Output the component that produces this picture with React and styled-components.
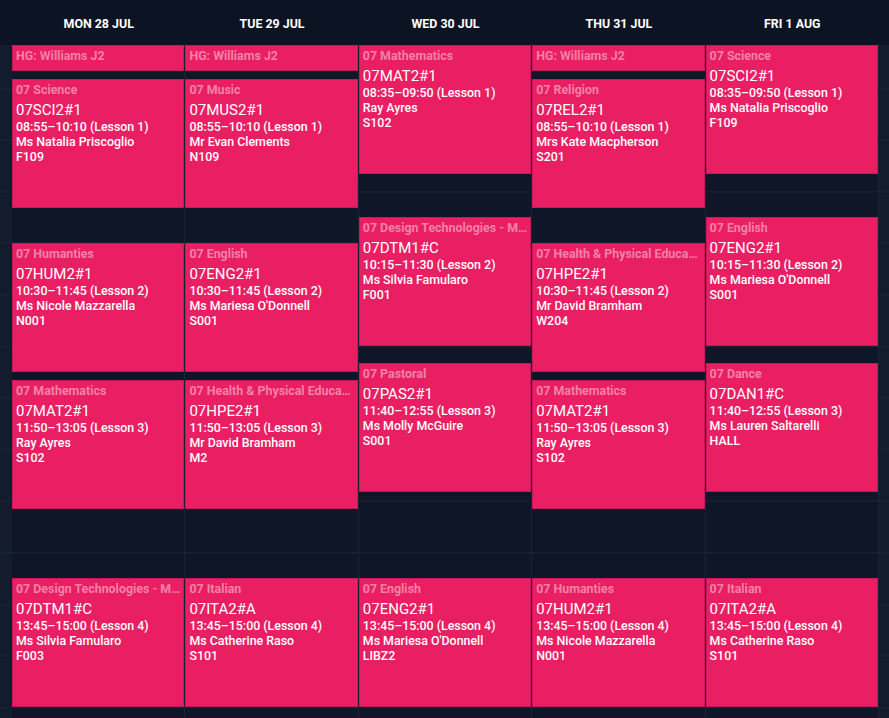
import React from 'react';
import styled, { createGlobalStyle } from 'styled-components';

const GlobalStyle = createGlobalStyle`
  html, body {
    margin: 0;
    padding: 0;
    background: #0d1526;
    font-family: Roboto, "Liberation Sans", sans-serif;
  }
`;

// time scale
const DAY_START = 8 * 60 + 35;
const DAY_END = 15 * 60 + 30;
const PX_PER_MIN = 1.72;

const toMin = (t) => {
  const [h, m] = t.split(':').map(Number);
  return h * 60 + m;
};

const days = [
  {
    label: 'MON 28 JUL',
    events: [
      { title: 'HG: Williams J2', start: '08:35', end: '08:50' },
      { title: '07 Science', code: '07SCI2#1', start: '08:55', end: '10:10', lesson: 1, teacher: 'Ms Natalia Priscoglio', room: 'F109' },
      { title: '07 Humanties', code: '07HUM2#1', start: '10:30', end: '11:45', lesson: 2, teacher: 'Ms Nicole Mazzarella', room: 'N001' },
      { title: '07 Mathematics', code: '07MAT2#1', start: '11:50', end: '13:05', lesson: 3, teacher: 'Ray Ayres', room: 'S102' },
      { title: '07 Design Technologies - Materials', code: '07DTM1#C', start: '13:45', end: '15:00', lesson: 4, teacher: 'Ms Silvia Famularo', room: 'F003' },
    ],
  },
  {
    label: 'TUE 29 JUL',
    events: [
      { title: 'HG: Williams J2', start: '08:35', end: '08:50' },
      { title: '07 Music', code: '07MUS2#1', start: '08:55', end: '10:10', lesson: 1, teacher: 'Mr Evan Clements', room: 'N109' },
      { title: '07 English', code: '07ENG2#1', start: '10:30', end: '11:45', lesson: 2, teacher: "Ms Mariesa O'Donnell", room: 'S001' },
      { title: '07 Health & Physical Education', code: '07HPE2#1', start: '11:50', end: '13:05', lesson: 3, teacher: 'Mr David Bramham', room: 'M2' },
      { title: '07 Italian', code: '07ITA2#A', start: '13:45', end: '15:00', lesson: 4, teacher: 'Ms Catherine Raso', room: 'S101' },
    ],
  },
  {
    label: 'WED 30 JUL',
    events: [
      { title: '07 Mathematics', code: '07MAT2#1', start: '08:35', end: '09:50', lesson: 1, teacher: 'Ray Ayres', room: 'S102' },
      { title: '07 Design Technologies - Materials', code: '07DTM1#C', start: '10:15', end: '11:30', lesson: 2, teacher: 'Ms Silvia Famularo', room: 'F001' },
      { title: '07 Pastoral', code: '07PAS2#1', start: '11:40', end: '12:55', lesson: 3, teacher: 'Ms Molly McGuire', room: 'S001' },
      { title: '07 English', code: '07ENG2#1', start: '13:45', end: '15:00', lesson: 4, teacher: "Ms Mariesa O'Donnell", room: 'LIBZ2' },
    ],
  },
  {
    label: 'THU 31 JUL',
    events: [
      { title: 'HG: Williams J2', start: '08:35', end: '08:50' },
      { title: '07 Religion', code: '07REL2#1', start: '08:55', end: '10:10', lesson: 1, teacher: 'Mrs Kate Macpherson', room: 'S201' },
      { title: '07 Health & Physical Education', code: '07HPE2#1', start: '10:30', end: '11:45', lesson: 2, teacher: 'Mr David Bramham', room: 'W204' },
      { title: '07 Mathematics', code: '07MAT2#1', start: '11:50', end: '13:05', lesson: 3, teacher: 'Ray Ayres', room: 'S102' },
      { title: '07 Humanties', code: '07HUM2#1', start: '13:45', end: '15:00', lesson: 4, teacher: 'Ms Nicole Mazzarella', room: 'N001' },
    ],
  },
  {
    label: 'FRI 1 AUG',
    events: [
      { title: '07 Science', code: '07SCI2#1', start: '08:35', end: '09:50', lesson: 1, teacher: 'Ms Natalia Priscoglio', room: 'F109' },
      { title: '07 English', code: '07ENG2#1', start: '10:15', end: '11:30', lesson: 2, teacher: "Ms Mariesa O'Donnell", room: 'S001' },
      { title: '07 Dance', code: '07DAN1#C', start: '11:40', end: '12:55', lesson: 3, teacher: 'Ms Lauren Saltarelli', room: 'HALL' },
      { title: '07 Italian', code: '07ITA2#A', start: '13:45', end: '15:00', lesson: 4, teacher: 'Ms Catherine Raso', room: 'S101' },
    ],
  },
];

const Page = styled.div`
  width: 889px;
  height: 718px;
  overflow: hidden;
  display: flex;
  flex-direction: column;
  background: #0d1526;
`;

const HeaderRow = styled.div`
  display: grid;
  grid-template-columns: repeat(5, 1fr);
  height: 45px;
  flex-shrink: 0;
  padding: 0 10px 0 12px;
  background: #0c1424;
`;

const DayHeader = styled.div`
  display: flex;
  align-items: center;
  justify-content: center;
  padding-top: 1px;
  color: #ffffff;
  font-size: 12.4px;
  font-weight: 700;
`;

const Body = styled.div`
  flex: 1;
  display: flex;
  min-height: 0;
`;

// 30 minute lines, first at 09:00
const gridLines = `
  background-image: repeating-linear-gradient(
    to bottom,
    transparent 0,
    transparent ${30 * PX_PER_MIN - 1}px,
    #1b2637 ${30 * PX_PER_MIN - 1}px,
    #1b2637 ${30 * PX_PER_MIN}px
  );
  background-position: 0 ${25 * PX_PER_MIN - 30 * PX_PER_MIN + 1}px;
`;

const Side = styled.div`
  width: ${({ w }) => w}px;
  flex-shrink: 0;
  background-color: #131c2c;
  ${gridLines}
`;

const Columns = styled.div`
  flex: 1;
  display: grid;
  grid-template-columns: repeat(5, 1fr);
`;

const DayColumn = styled.div`
  position: relative;
  height: ${(DAY_END - DAY_START) * PX_PER_MIN}px;
  border-right: 1px solid #1a2333;
  background-color: #0e1627;
  ${gridLines}
`;

const Card = styled.div`
  position: absolute;
  left: 0;
  right: 0;
  box-sizing: border-box;
  background: #e91e63;
  border: 1px solid #c8185a;
  padding: 2px 3px 1px;
  overflow: hidden;
  color: #ffffff;
`;

const Subject = styled.div`
  font-size: 12.4px;
  font-weight: 700;
  line-height: 16px;
  color: rgba(255, 255, 255, 0.45);
  white-space: nowrap;
  overflow: hidden;
  text-overflow: ellipsis;
`;

const Code = styled.div`
  margin-top: 3px;
  font-size: 15px;
  line-height: 18px;
`;

const Line = styled.div`
  font-size: 12.4px;
  font-weight: 500;
  line-height: 15px;
  white-space: nowrap;
`;

const Event = ({ ev }) => {
  const top = (toMin(ev.start) - DAY_START) * PX_PER_MIN;
  const height = (toMin(ev.end) - toMin(ev.start)) * PX_PER_MIN;
  return (
    <Card style={{ top, height }}>
      <Subject>{ev.title}</Subject>
      {ev.code && (
        <>
          <Code>{ev.code}</Code>
          <Line>{`${ev.start}\u2013${ev.end} (Lesson ${ev.lesson})`}</Line>
          <Line>{ev.teacher}</Line>
          <Line>{ev.room}</Line>
        </>
      )}
    </Card>
  );
};

export default function App() {
  return (
    <Page>
      <GlobalStyle />
      <HeaderRow>
        {days.map((d) => (
          <DayHeader key={d.label}>{d.label}</DayHeader>
        ))}
      </HeaderRow>
      <Body>
        <Side w={12} />
        <Columns>
          {days.map((d) => (
            <DayColumn key={d.label}>
              {d.events.map((ev, i) => (
                <Event key={i} ev={ev} />
              ))}
            </DayColumn>
          ))}
        </Columns>
        <Side w={10} />
      </Body>
    </Page>
  );
}
